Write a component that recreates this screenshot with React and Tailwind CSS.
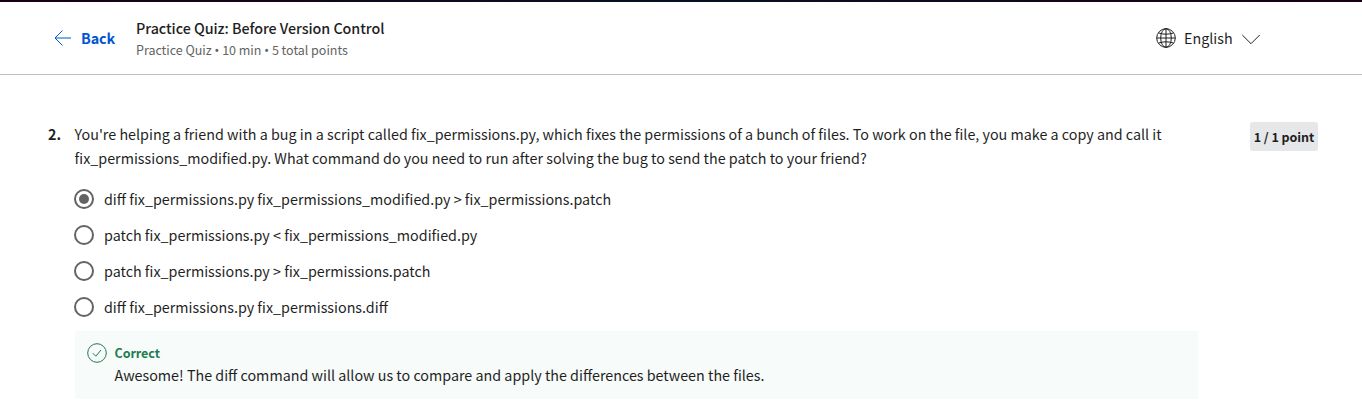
const options = [
  "diff fix_permissions.py fix_permissions_modified.py > fix_permissions.patch",
  "patch fix_permissions.py < fix_permissions_modified.py",
  "patch fix_permissions.py > fix_permissions.patch",
  "diff fix_permissions.py fix_permissions.diff",
];

function Globe() {
  return (
    <svg className="h-5 w-5 shrink-0" viewBox="0 0 20 20" fill="none" stroke="#1f1f1f" strokeWidth="1">
      <circle cx="10" cy="10" r="9.3" />
      <ellipse cx="10" cy="10" rx="5.3" ry="9.3" />
      <path d="M10 .7v18.6M.7 10h18.6M2.8 5c2 .8 4.500 1.200 7.200 1.200s5.200-.4 7.200-1.200M2.800 15c2-.8 4.500-1.200 7.200-1.200s5.200.4 7.200 1.200" />
    </svg>
  );
}

function Radio({ checked }) {
  return (
    <span className="flex h-5 w-5 shrink-0 items-center justify-center rounded-full border-2 border-[#636363]">
      {checked && <span className="h-2.5 w-2.5 rounded-full bg-[#636363]" />}
    </span>
  );
}

function Dot() {
  return <span className="inline-block w-[5px] text-center font-['Noto_Sans']">•</span>;
}

export default function App() {
  return (
    <div className="h-[414px] w-[1362px] overflow-hidden bg-white font-['Noto_Sans_CJK_SC',sans-serif] text-[14.32px] text-[#1f1f1f]">
      <div className="h-0.5 bg-gradient-to-r from-[#160014] via-[#061022] to-[#160014]" />
      <header className="flex h-[73px] items-start border-b border-[#bdbdbd] pl-[54px]">
        <div className="flex w-[82px] pt-6">
          <svg className="mt-1 h-4 w-[18px] shrink-0" viewBox="0 0 18 16" fill="none" stroke="#0056d2" strokeWidth="1">
            <path d="M8.500.5 1 8l7.500 7.500M1 8h16" />
          </svg>
          <span className="ml-[9px] leading-6 font-bold tracking-[-0.1px] text-[#0056d2]">Back</span>
        </div>
        <div className="w-[1020px] whitespace-nowrap pt-[14px]">
          <h1 className="leading-[23px] font-medium tracking-[-0.05px]">Practice Quiz: Before Version Control</h1>
          <p className="mt-px text-[12.53px] leading-5 tracking-[-0.03px] text-[#636363]">Practice Quiz <Dot /> 10 min <Dot /> 5 total points</p>
        </div>
        <div className="flex items-start pt-6">
          <span className="pt-0.5"><Globe /></span>
          <span className="ml-2 w-[50px] leading-6">English</span>
          <svg className="mt-[8px] ml-2 h-[11px] w-[18px]" viewBox="0 0 18 11" fill="none" stroke="#1f1f1f" strokeWidth="1">
            <path d="M.3 1 9 9.700 17.700 1" />
          </svg>
        </div>
      </header>
      <main className="flex pt-[47px] pl-12">
        <div className="w-[26px] shrink-0 leading-6 font-bold">2.</div>
        <div className="w-[1124px] shrink-0">
          <p className="pl-[0.6px] leading-6 whitespace-nowrap">
            You're helping a friend with a bug in a script called fix_permissions.py, which fixes the permissions of a bunch of files. To work on the file, you make a copy and call it<br />
            fix_permissions_modified.py. What command do you need to run after solving the bug to send the patch to your friend?
          </p>
          <div className="mt-[19px] flex flex-col gap-4">
            {options.map((text, i) => (
              <label key={text} className="flex h-5 items-center gap-2.5 whitespace-nowrap">
                <Radio checked={i === 0} />
                <span className="leading-5">{text}</span>
              </label>
            ))}
          </div>
          <div className="mt-3.5 ml-px flex h-[68px] bg-[#f7fbf9] pt-3 pl-3">
            <svg className="h-5 w-5 shrink-0" viewBox="0 0 20 20" fill="none" stroke="#1d7c50" strokeWidth="1">
              <circle cx="10" cy="10" r="9.300" />
              <path d="m5.800 10.200 3 3L14 7" />
            </svg>
            <div className="ml-[7.5px] whitespace-nowrap">
              <p className="text-[12.53px] leading-5 font-bold tracking-[-0.05px] text-[#1d7c50]">Correct</p>
              <p className="leading-6">Awesome! The diff command will allow us to compare and apply the differences between the files.</p>
            </div>
          </div>
        </div>
        <div className="ml-[52px] flex h-[29px] w-[68px] shrink-0 items-center justify-center rounded-[3px] bg-[#e5e7e8] pt-0.5 text-[12.53px] font-bold tracking-[-0.05px] whitespace-nowrap">1 / 1 point</div>
      </main>
    </div>
  );
}
